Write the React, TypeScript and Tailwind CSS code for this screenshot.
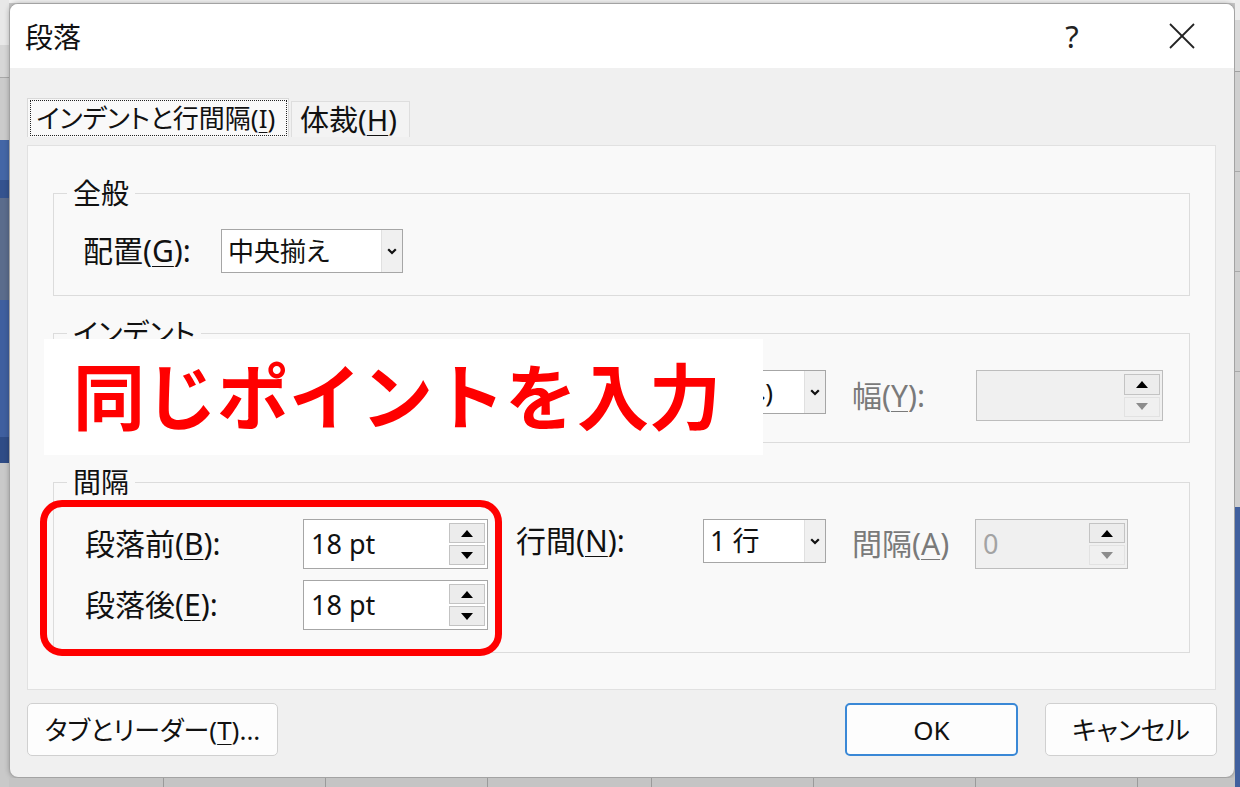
import React from "react";

const Up = ({ color = "#000" }: { color?: string }) => (
  <svg width="12" height="7" viewBox="0 0 12 7">
    <polygon points="0,7 6,0 12,7" fill={color} />
  </svg>
);
const Down = ({ color = "#000" }: { color?: string }) => (
  <svg width="12" height="7" viewBox="0 0 12 7">
    <polygon points="0,0 12,0 6,7" fill={color} />
  </svg>
);
const Chevron = () => (
  <svg width="10" height="7" viewBox="0 0 10 7">
    <polyline points="1.2,1.2 5,5 8.8,1.2" fill="none" stroke="#111" strokeWidth="2.2" />
  </svg>
);

function Spinner({ value, disabled, className }: { value: string; disabled?: boolean; className: string }) {
  return (
    <div
      className={
        "flex items-stretch border " +
        (disabled ? "border-[#bdbdbd] bg-[#f0f0f0] " : "border-[#a6a6a6] bg-white ") +
        className
      }
    >
      <div className={"flex flex-1 items-center pl-[7px] " + (disabled ? "text-[#a3a3a3]" : "text-[#111]")}>
        {value}
      </div>
      <div className="flex w-[38px] flex-col gap-[2px] py-[3px] pr-[2px]">
        <div className="flex flex-1 items-center justify-center border border-[#c3c3c3] bg-[#ececec]">
          <Up />
        </div>
        {disabled ? (
          <div className="flex flex-1 items-center justify-center border border-[#e2e2e2] bg-[#f0f0f0]">
            <Down color="#8c8c8c" />
          </div>
        ) : (
          <div className="flex flex-1 items-center justify-center border border-[#c3c3c3] bg-[#ececec]">
            <Down />
          </div>
        )}
      </div>
    </div>
  );
}

function Select({ value, className }: { value: string; className: string }) {
  return (
    <div className={"flex items-stretch border border-[#a6a6a6] bg-white " + className}>
      <div className="flex flex-1 items-center pl-[6px] text-[#111]">{value}</div>
      <div className="flex w-[21px] items-center justify-center border-l border-[#e0e0e0] bg-[#f0f0f0]">
        <Chevron />
      </div>
    </div>
  );
}

const U = ({ c }: { c: string }) => <span className="underline decoration-1 underline-offset-[4px]">{c}</span>;

export default function App() {
  return (
    <div className="relative flex h-[787px] w-[1240px] overflow-hidden bg-[#c8c8c8] font-['Noto_Sans','Noto_Sans_CJK_JP',sans-serif] text-[26px] leading-[32px] text-[#111] [font-feature-settings:'palt']">
      {/* left background strip */}
      <div className="flex w-[9px] flex-col">
        <div className="h-[45px] bg-[#e8e8e8]" />
        <div className="h-[33px] border-b border-[#a8a8a8] bg-[#d6d6d6]" />
        <div className="h-[62px] bg-[#cbcbcb]" />
        <div className="h-[40px] bg-[#4466a6]" />
        <div className="h-[18px] bg-[#34538f]" />
        <div className="h-[102px] bg-[#5b6c8c]" />
        <div className="h-[137px] bg-[#3f5f9f]" />
        <div className="h-[26px] bg-[#2f4c86]" />
        <div className="flex-1 bg-[#c9c9c9]" />
      </div>

      {/* dialog column */}
      <div className="flex w-[1226px] flex-col">
        <div className="h-[3px] bg-[#f1f1f1]" />
        <div className="flex h-[775px] flex-col overflow-hidden rounded-[9px] border border-[#a3a3a3] bg-[#f0f0f0] shadow-[0_0_5px_rgba(0,0,0,0.25)]">
          {/* title bar */}
          <div className="flex h-[64px] items-center bg-white">
            <div className="flex-1 pl-[15px] pt-[2px] text-[28px]">段落</div>
            <div className="flex w-[46px] justify-center text-[31px] text-[#222]">?</div>
            <div className="ml-[64px] mr-[29px] flex w-[46px] justify-center">
              <svg width="28" height="28" viewBox="0 0 28 28">
                <line x1="2" y1="2" x2="26" y2="26" stroke="#222" strokeWidth="1.8" />
                <line x1="26" y1="2" x2="2" y2="26" stroke="#222" strokeWidth="1.8" />
              </svg>
            </div>
          </div>

          {/* body */}
          <div className="flex flex-1 flex-col">
            {/* tabs */}
            <div className="ml-[17px] mt-[30px] flex h-[39px] items-end">
              <div className="flex h-[39px] w-[262px] items-center justify-center border border-b-0 border-[#d9d9d9] bg-[#f9f9f9]">
                <div className="flex h-[36px] w-[257px] items-center border border-dotted border-[#222] pl-[6px]">
                  インデントと行間隔(<U c="I" />)
                </div>
              </div>
              <div className="ml-[2px] flex h-[36px] w-[119px] items-center border border-b-0 border-[#dedede] bg-[#f3f3f3] pl-[8px] text-[29px]">
                体裁(<U c="H" />)
              </div>
            </div>

            {/* panel */}
            <div className="ml-[17px] mr-[18px] mt-[8px] flex h-[545px] flex-col border border-[#e1e1e1] bg-[#f9f9f9] px-[25px]">
              {/* 全般 */}
              <fieldset className="mt-[34px] h-[116px] border border-[#dcdcdc] pl-[13px]">
                <legend className="px-[6px] text-[28px] leading-[26px]">全般</legend>
                <div className="ml-[16px] mt-[23px] flex h-[44px] items-center">
                  <div className="w-[138px] text-[30px]">
                    配置(<U c="G" />):
                  </div>
                  <Select value="中央揃え" className="h-[44px] w-[182px]" />
                </div>
              </fieldset>

              {/* インデント */}
              <fieldset className="mt-[24px] h-[123px] border border-[#dcdcdc] pl-[13px]">
                <legend className="px-[6px] text-[28px] leading-[26px]">インデント</legend>
                <div className="ml-[18px] mt-[24px] flex items-start">
                  <div className="h-[51px] w-[218px]" />
                  <Spinner value="" className="h-[51px] w-[185px]" />
                  <div className="ml-[28px] h-[44px] w-[187px]" />
                  <Select value="(なし)" className="h-[44px] w-[123px]" />
                  <div className="ml-[26px] flex h-[51px] w-[124px] items-center text-[30px] text-[#7a7a7a]">
                    幅(<U c="Y" />):
                  </div>
                  <Spinner value="" disabled className="h-[51px] w-[187px]" />
                </div>
              </fieldset>

              {/* 間隔 */}
              <fieldset className="mt-[26px] h-[184px] border border-[#dcdcdc] pl-[13px]">
                <legend className="px-[6px] text-[28px] leading-[26px]">間隔</legend>
                <div className="ml-[18px] mt-[24px] flex items-start">
                  <div className="flex h-[50px] w-[218px] items-center text-[30px]">
                    段落前(<U c="B" />):
                  </div>
                  <Spinner value="18 pt" className="h-[50px] w-[185px] text-[27px]" />
                  <div className="ml-[28px] flex h-[44px] w-[187px] items-center text-[30px]">
                    行間(<U c="N" />):
                  </div>
                  <Select value="1 行" className="h-[44px] w-[123px] text-[27px]" />
                  <div className="ml-[26px] flex h-[50px] w-[123px] items-center text-[30px] text-[#7a7a7a]">
                    間隔(<U c="A" />)
                  </div>
                  <Spinner value="0" disabled className="h-[50px] w-[153px] text-[27px]" />
                </div>
                <div className="ml-[18px] mt-[11px] flex items-start">
                  <div className="flex h-[50px] w-[218px] items-center text-[30px]">
                    段落後(<U c="E" />):
                  </div>
                  <Spinner value="18 pt" className="h-[50px] w-[185px] text-[27px]" />
                </div>
              </fieldset>
            </div>

            {/* buttons */}
            <div className="ml-[17px] mr-[17px] mt-[13px] flex h-[53px]">
              <button className="flex w-[251px] items-center justify-center rounded-[5px] border border-[#d0d0d0] bg-[#fdfdfd]">
                タブとリーダー(<U c="T" />)...
              </button>
              <div className="flex-1" />
              <button className="flex w-[173px] items-center justify-center rounded-[5px] border-2 border-[#3a88d6] bg-[#fdfdfd]">
                OK
              </button>
              <button className="ml-[27px] flex w-[172px] items-center justify-center rounded-[5px] border border-[#d0d0d0] bg-[#fdfdfd]">
                キャンセル
              </button>
            </div>
          </div>
        </div>
        <div className="flex h-[9px] bg-[#c4c4c4]">
          <div className="w-[155px] border-r border-[#9a9a9a]" />
          <div className="w-[162px] border-r border-[#9a9a9a]" />
          <div className="w-[162px] border-r border-[#9a9a9a]" />
          <div className="w-[164px] border-r border-[#9a9a9a]" />
          <div className="w-[162px] border-r border-[#9a9a9a]" />
          <div className="w-[162px] border-r border-[#9a9a9a]" />
          <div className="w-[162px] border-r border-[#9a9a9a]" />
        </div>
      </div>

      {/* right background strip */}
      <div className="flex w-[5px] flex-col">
        <div className="h-[20px] bg-[#ededed]" />
        <div className="h-[52px] border-b border-[#a0a0a0] bg-[#d8d8d8]" />
        <div className="h-[100px] border-b border-[#a8a8a8] bg-[#cfcfcf]" />
        <div className="h-[100px] border-b border-[#a8a8a8] bg-[#cfcfcf]" />
        <div className="h-[100px] border-b border-[#a8a8a8] bg-[#cfcfcf]" />
        <div className="h-[135px] bg-[#cfcfcf]" />
        <div className="flex-1 bg-[#41609e]" />
      </div>

      {/* annotation: white label */}
      <div className="absolute left-[44px] top-[339px] flex h-[116px] w-[719px] items-center bg-white pb-[8px] pl-[29px]">
        <span className="font-['Noto_Sans_CJK_JP',sans-serif] text-[72px] font-bold leading-none text-[#ff0000] [font-feature-settings:normal]">
          同じポイントを入力
        </span>
      </div>

      {/* annotation: red rounded frame */}
      <div className="absolute left-[40px] top-[500px] h-[156px] w-[462px] rounded-[22px] border-[7px] border-[#ff0000]" />
    </div>
  );
}
